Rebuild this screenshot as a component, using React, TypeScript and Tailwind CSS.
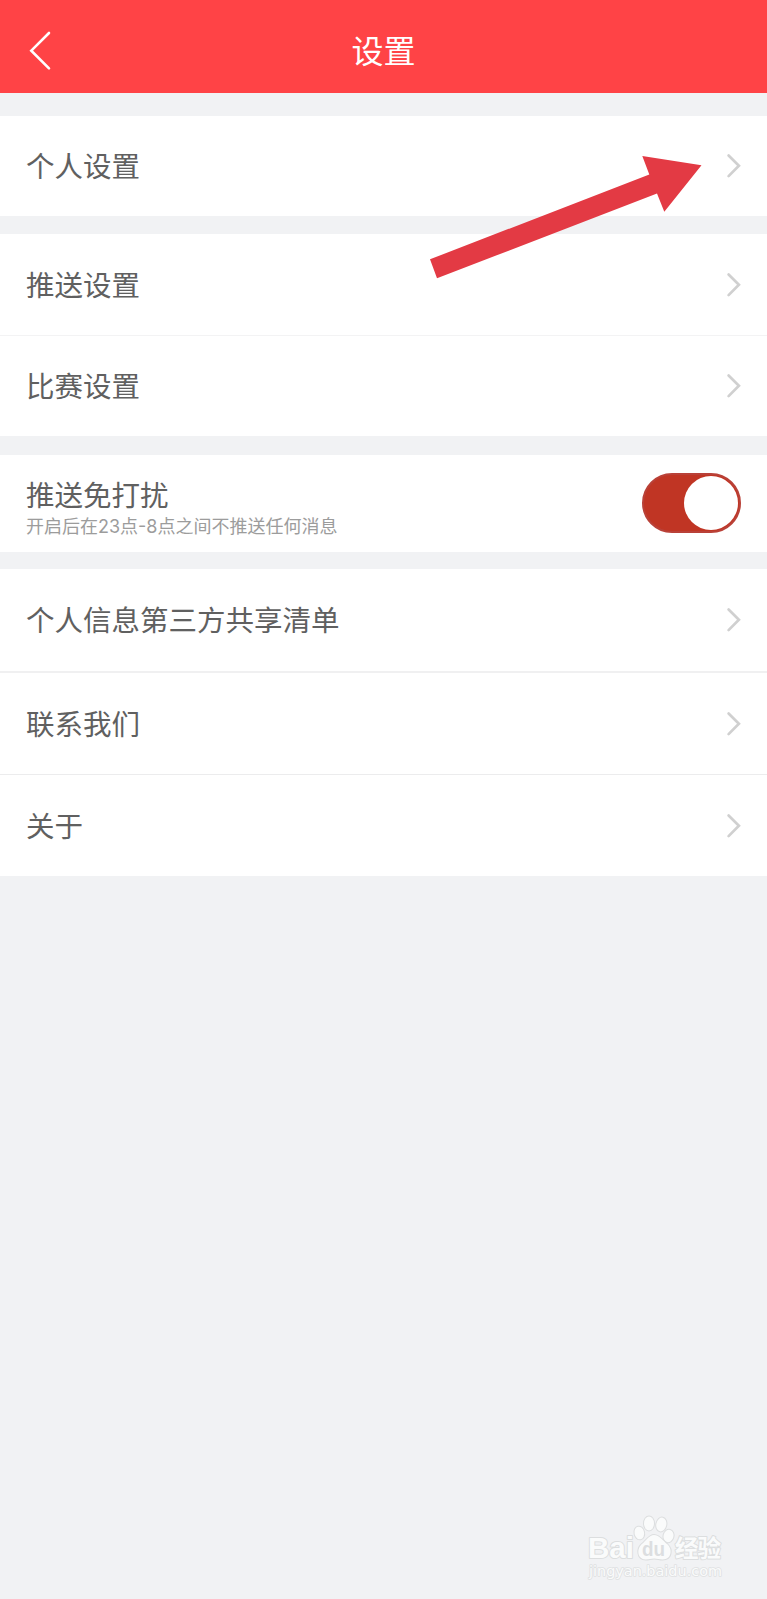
import React from 'react';

function Chevron() {
  return (
    <svg className="block h-[26px] w-4 shrink-0" viewBox="0 0 16 26" fill="none">
      <path d="M2.6 2.5 12.9 12.8 2.6 23.1" stroke="#d0d0d0" strokeWidth="2.7" strokeLinecap="round" strokeLinejoin="miter" />
    </svg>
  );
}

function Row({ label, height, divider = '' }: { label: string; height: string; divider?: string }) {
  return (
    <button className={`flex w-full items-center justify-between bg-white pr-[25px] pl-[26px] ${height} ${divider}`}>
      <span className="pb-[2px] text-[28.5px] leading-10 whitespace-nowrap">{label}</span>
      <Chevron />
    </button>
  );
}

function Toggle() {
  return (
    <button
      role="switch"
      aria-checked="true"
      className="mb-px flex h-[60px] w-[99px] items-center justify-end rounded-full border-2 border-[#b94138] bg-[#c03524] pr-px"
    >
      <span className="block size-[54px] rounded-full bg-white" />
    </button>
  );
}

function Arrow() {
  return (
    <svg className="pointer-events-none absolute top-[150px] left-[425px] h-[135px] w-[285px]" viewBox="425 150 285 135">
      <path d="M430 259.3 649.3 174.5 642.3 156 701.5 165.2 664.3 211.8 657 193.4 437 278.3Z" fill="#e33a44" />
    </svg>
  );
}

function Watermark() {
  return (
    <svg className="pointer-events-none absolute right-0 bottom-0 h-[100px] w-[200px]" viewBox="0 0 200 100">
      <g fill="#fafbfb" stroke="#dcdedf" strokeWidth="2" strokeLinejoin="round" paintOrder="stroke">
        <text x="21" y="59.3" fontSize="30" fontWeight="700" textLength="46" lengthAdjust="spacingAndGlyphs" className="font-['Liberation_Sans',sans-serif]">Bai</text>
        <ellipse cx="72.3" cy="34" rx="4.8" ry="6.4" transform="rotate(-12 72.3 34)" />
        <ellipse cx="82" cy="24.5" rx="5" ry="7" />
        <ellipse cx="94.3" cy="25.5" rx="5" ry="7" transform="rotate(12 94.3 25.5)" />
        <ellipse cx="101.5" cy="37" rx="5" ry="6.2" transform="rotate(15 101.5 37)" />
        <path d="M87 36c-5 0-7.5 5.3-12.6 9.6-4.7 4.4-4.4 14.6 4.3 15 3.5 0 5-1 8.4-1s5 1 8.5 1c9.3-.2 10-10.2 5-15C95.5 41.3 92.5 36 87 36Z" />
        <text x="108" y="58" fontSize="23.5" fontWeight="700" textLength="46" className="font-['Noto_Sans_CJK_SC',sans-serif]">经验</text>
        <text x="22" y="76.5" fontSize="14" textLength="133" lengthAdjust="spacingAndGlyphs" stroke="#dfe1e2" strokeWidth="1.6" className="font-['DejaVu_Sans',sans-serif]">jingyan.baidu.com</text>
      </g>
      <text x="75" y="56.5" fontSize="20" textLength="23" fontWeight="700" lengthAdjust="spacingAndGlyphs" fill="#dcdee0" className="font-['Liberation_Sans',sans-serif]">du</text>
    </svg>
  );
}

export default function App() {
  return (
    <div className="relative flex h-[1599px] w-[767px] flex-col overflow-hidden bg-[#f1f2f4] font-['Noto_Sans_CJK_SC',sans-serif] text-[#606060]">
      <header className="grid h-[93px] grid-cols-[1fr_auto_1fr] items-center bg-[#ff4346] pt-[9px] text-white">
        <button className="ml-[27px] w-fit">
          <svg className="block h-10 w-[26px]" viewBox="0 0 26 40" fill="none">
            <path d="M22 2 4.3 19.7 22 37.4" stroke="currentColor" strokeWidth="2.6" strokeLinecap="round" />
          </svg>
        </button>
        <h1 className="pb-1 text-[32px] leading-10">设置</h1>
      </header>

      <main className="flex flex-col pt-[23px]">
        <section>
          <Row label="个人设置" height="h-[100px]" />
        </section>

        <section className="mt-[18px]">
          <Row label="推送设置" height="h-[102px]" divider="border-b border-[#f3f3f4]" />
          <Row label="比赛设置" height="h-[100px]" />
        </section>

        <section className="mt-[19px] flex h-[97px] items-center justify-between bg-white pr-[26px] pl-[26px]">
          <div className="flex flex-col pt-[7px]">
            <span className="text-[28.5px] leading-[38px]">推送免打扰</span>
            <span className="pt-px font-['Inter','Noto_Sans_CJK_SC',sans-serif] text-[18px] leading-[25px] whitespace-nowrap text-[#9c9c9c]">开启后在23点-8点之间不推送任何消息</span>
          </div>
          <Toggle />
        </section>

        <section className="mt-[17px]">
          <Row label="个人信息第三方共享清单" height="h-[104px]" divider="border-b-2 border-[#f0f0f1]" />
          <Row label="联系我们" height="h-[102px]" divider="border-b border-[#ececed]" />
          <Row label="关于" height="h-[101px]" />
        </section>
      </main>

      <Arrow />
      <Watermark />
    </div>
  );
}
